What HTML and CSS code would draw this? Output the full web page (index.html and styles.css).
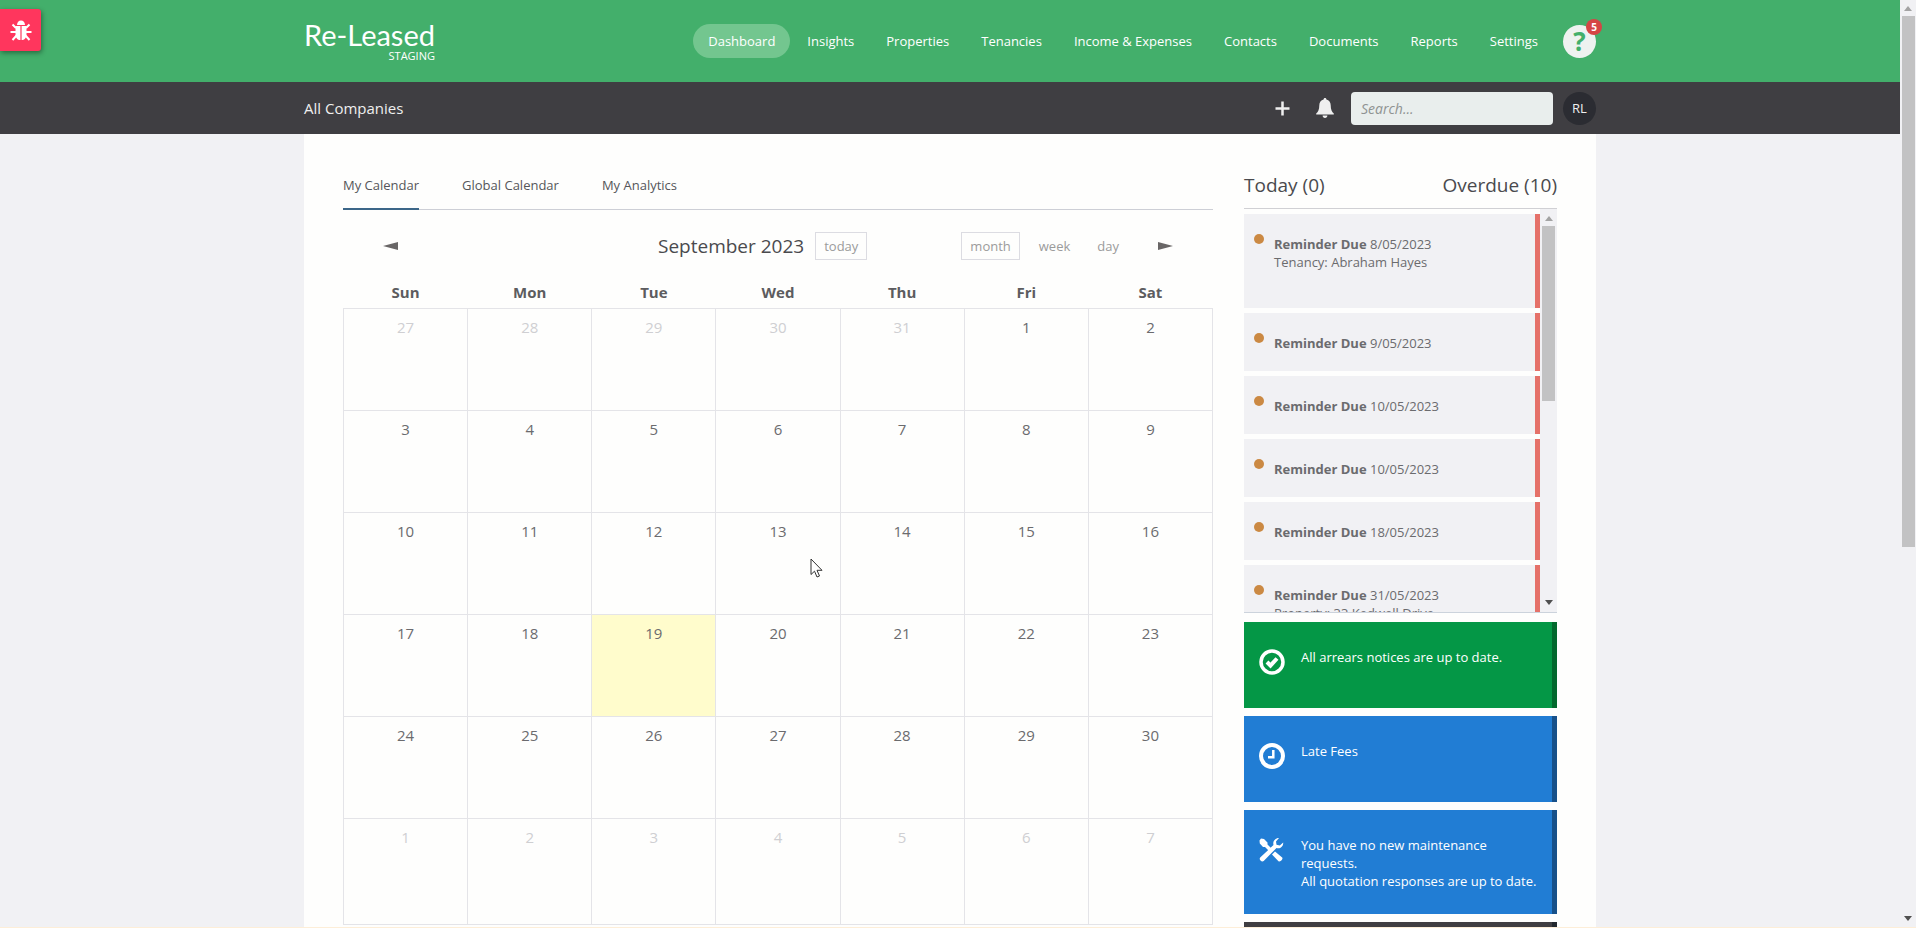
FILE: index.html
```html
<!DOCTYPE html>
<html lang="en">
<head>
    <meta charset="UTF-8">
    <meta name="viewport" content="width=device-width, initial-scale=1.0">
    <title>Dashboard - Re-Leased</title>
    <link rel="stylesheet" href="styles.css">
</head>
<body>
    <div class="page">
        <header class="header">
            <div class="container header-row">
                <a class="logo" href="#">
                    <span class="logo-name">Re-Leased</span>
                    <span class="logo-env">STAGING</span>
                </a>
                <nav class="nav">
                    <a class="active" href="#">Dashboard</a>
                    <a href="#">Insights</a>
                    <a href="#">Properties</a>
                    <a href="#">Tenancies</a>
                    <a href="#">Income &amp; Expenses</a>
                    <a href="#">Contacts</a>
                    <a href="#">Documents</a>
                    <a href="#">Reports</a>
                    <a href="#">Settings</a>
                </nav>
                <button class="help" type="button" aria-label="Help">?<span class="badge">5</span></button>
            </div>
        </header>

        <div class="subheader">
            <div class="container subheader-row">
                <a class="company" href="#">All Companies</a>
                <button class="icon-btn" type="button" aria-label="Add">
                    <svg width="15" height="15" viewBox="0 0 15 15"><path d="M7.5 0.5v14M0.5 7.5h14" stroke="#efefef" stroke-width="2.500"/></svg>
                </button>
                <button class="icon-btn" type="button" aria-label="Notifications">
                    <svg width="18" height="20" viewBox="0 0 18 20"><path fill="#efefef" d="M9 0c.9 0 1.4.6 1.4 1.5 2.7.6 4.3 2.8 4.3 5.7 0 4.500 1.300 6.800 3.100 8.300v1H.2v-1C2 14 3.300 11.700 3.300 7.200c0-2.900 1.600-5.100 4.300-5.700C7.600.6 8.100 0 9 0zM6.600 17.500h4.800c0 1.400-1 2.400-2.400 2.400s-2.400-1-2.400-2.400z"/></svg>
                </button>
                <input class="search" type="text" placeholder="Search..." aria-label="Search">
                <button class="avatar" type="button">RL</button>
            </div>
        </div>

        <main class="container content">
            <section class="main">
                <div class="tabs">
                    <a class="active" href="#">My Calendar</a>
                    <a href="#">Global Calendar</a>
                    <a href="#">My Analytics</a>
                </div>

                <div class="toolbar">
                    <button class="arrow" type="button" aria-label="Previous month">
                        <svg width="15" height="8" viewBox="0 0 15 8"><path fill="#696666" d="M0 4L15 0v8z"/></svg>
                    </button>
                    <div class="toolbar-title">
                        <h2>September 2023</h2>
                        <button class="boxed" type="button">today</button>
                    </div>
                    <div class="views">
                        <button class="boxed" type="button">month</button>
                        <button type="button">week</button>
                        <button class="day" type="button">day</button>
                    </div>
                    <button class="arrow" type="button" aria-label="Next month">
                        <svg width="15" height="8" viewBox="0 0 15 8"><path fill="#696666" d="M15 4L0 0v8z"/></svg>
                    </button>
                </div>

                <table class="calendar">
                    <thead>
                        <tr><th>Sun</th><th>Mon</th><th>Tue</th><th>Wed</th><th>Thu</th><th>Fri</th><th>Sat</th></tr>
                    </thead>
                    <tbody>
                        <tr><td class="other">27</td><td class="other">28</td><td class="other">29</td><td class="other">30</td><td class="other">31</td><td>1</td><td>2</td></tr>
                        <tr><td>3</td><td>4</td><td>5</td><td>6</td><td>7</td><td>8</td><td>9</td></tr>
                        <tr><td>10</td><td>11</td><td>12</td><td>13</td><td>14</td><td>15</td><td>16</td></tr>
                        <tr><td>17</td><td>18</td><td class="today">19</td><td>20</td><td>21</td><td>22</td><td>23</td></tr>
                        <tr><td>24</td><td>25</td><td>26</td><td>27</td><td>28</td><td>29</td><td>30</td></tr>
                        <tr><td class="other">1</td><td class="other">2</td><td class="other">3</td><td class="other">4</td><td class="other">5</td><td class="other">6</td><td class="other">7</td></tr>
                    </tbody>
                </table>
            </section>

            <aside class="sidebar">
                <div class="sidebar-head">
                    <h2>Today (0)</h2>
                    <h2>Overdue (10)</h2>
                </div>
                <div class="reminders">
                    <ul class="reminder-list">
                        <li><b>Reminder Due</b> 8/05/2023<br>Tenancy: Abraham Hayes<br>&nbsp;</li>
                        <li><b>Reminder Due</b> 9/05/2023</li>
                        <li><b>Reminder Due</b> 10/05/2023</li>
                        <li><b>Reminder Due</b> 10/05/2023</li>
                        <li><b>Reminder Due</b> 18/05/2023</li>
                        <li><b>Reminder Due</b> 31/05/2023<br>Property: 33 Kedwell Drive</li>
                    </ul>
                    <div class="scrollbar list-bar">
                        <svg width="8" height="5" viewBox="0 0 8 5"><path fill="#a3a3a3" d="M4 0l4 5H0z"/></svg>
                        <div class="thumb"></div>
                        <svg width="8" height="5" viewBox="0 0 8 5"><path fill="#505050" d="M4 5l4-5H0z"/></svg>
                    </div>
                </div>

                <div class="tiles">
                    <a class="tile green" href="#">
                        <svg width="26" height="26" viewBox="0 0 26 26" fill="none" stroke="#fff"><circle cx="13" cy="13" r="11" stroke-width="3.500"/><path d="M8 13l3.500 3.500L18 9.500" stroke-width="4"/></svg>
                        <span>All arrears notices are up to date.</span>
                    </a>
                    <a class="tile" href="#">
                        <svg width="26" height="26" viewBox="0 0 26 26" fill="none" stroke="#fff"><circle cx="13" cy="13" r="11" stroke-width="4"/><path d="M14.300 7v7.200H9" stroke-width="2.500"/></svg>
                        <span>Late Fees</span>
                    </a>
                    <a class="tile" href="#">
                        <svg width="26" height="26" viewBox="0 0 26 26" fill="#fff"><path d="M2 1.500L5 2l3.500 3.500v2l4 4-2.500 2.500-4-4H4L.8 6.500.5 3.500z"/><path d="M16 14.500l7.200 6c1.200 1.500-2 5-3.700 3.700L13 17.500z"/><path d="M20 1c-4 0-6.500 3.500-5.500 7L1.200 20.500c-1.800 2 1.500 5.200 3.500 3.500L17.500 11c3.500 1.200 7-1.500 6.700-5.500l-3.400 3-3.300-.7-.5-3.300z"/></svg>
                        <span>You have no new maintenance requests.<br>All quotation responses are up to date.</span>
                    </a>
                    <a class="tile dark" href="#"></a>
                </div>
            </aside>
        </main>
    </div>

    <div class="scrollbar page-bar">
        <svg width="8" height="5" viewBox="0 0 8 5"><path fill="#a3a3a3" d="M4 0l4 5H0z"/></svg>
        <div class="thumb"></div>
        <svg width="8" height="5" viewBox="0 0 8 5"><path fill="#505050" d="M4 5l4-5H0z"/></svg>
    </div>

    <button class="bug" type="button" aria-label="Report a bug">
        <svg width="22" height="21" viewBox="0 0 22 21"><path fill="#fff" d="M7 5a4 4.500 0 0 1 8 0z"/><path fill="#fff" d="M5.500 6h4.900v14C7.500 20 5.500 18 5.500 14zM11.600 6h4.900v8c0 4-2 6-4.900 6z"/><path d="M6 8L2.500 4.500M6 12H.5M6.500 15.500L2.500 20M16 8l3.500-3.500M16 12h5.500M15.500 15.500l4 4.500" stroke="#fff" stroke-width="2"/></svg>
    </button>

    <svg class="cursor" width="13" height="20" viewBox="0 0 13 20"><path fill="#fff" stroke="#333" d="M1 1v15.500l3.500-3.300 2.500 5.800 2.500-1-2.500-5.700h5z"/></svg>
</body>
</html>
```
FILE: styles.css
```css
*{
    margin: 0;
    padding: 0;
    box-sizing: border-box;
}
body{
    display: flex;
    height: 100vh;
    overflow: hidden;
    border-bottom: 1px solid #fdeed8;
    font-family: "Open Sans", sans-serif;
    font-size: 13px;
    line-height: 18px;
    color: #6b6b6e;
    background-color: #f1f1f4;
}
a{
    color: inherit;
    text-decoration: none;
}
button{
    border: none;
    background: none;
    font: inherit;
    color: inherit;
}
h2{
    font-size: 19px;
    font-weight: 400;
    line-height: 26px;
    color: #4a4a4d;
}
.page{
    flex: 1;
    min-width: 0;
    display: flex;
    flex-direction: column;
    overflow: hidden;
}
.container{
    width: 100%;
    max-width: 1292px;
    margin: 0 auto;
}

/* header */
.header{
    flex: none;
    background-color: #43af6b;
    color: #fff;
}
.header-row{
    display: flex;
    align-items: center;
    height: 82px;
}
.logo{
    display: flex;
    flex-direction: column;
    align-items: flex-end;
    margin-right: auto;
}
.logo-name{
    font-family: Lato, sans-serif;
    font-size: 29px;
    line-height: 30px;
}
.logo-env{
    font-size: 11px;
    line-height: 12px;
}
.nav{
    display: flex;
    gap: 2px;
}
.nav a{
    padding: 8px 15px;
    border-radius: 17px;
}
.nav a.active{
    background-color: #73c68f;
}
.help{
    position: relative;
    width: 33px;
    height: 33px;
    margin-left: 10px;
    border-radius: 50%;
    background-color: #eef2f0;
    color: #43af6b;
    font-size: 26px;
    font-weight: 700;
    line-height: 33px;
}
.badge{
    position: absolute;
    top: -6px;
    right: -6px;
    width: 16px;
    height: 16px;
    border-radius: 50%;
    background-color: #d54545;
    color: #fff;
    font-size: 10px;
    line-height: 16px;
}
.subheader{
    flex: none;
    background-color: #3f3e42;
    color: #efefef;
}
.subheader-row{
    display: flex;
    align-items: center;
    height: 52px;
}
.company{
    margin-right: auto;
    font-size: 15px;
}
.icon-btn{
    display: flex;
    margin-right: 26px;
}
.icon-btn + .icon-btn{
    margin-right: 17px;
}
.search{
    width: 202px;
    height: 33px;
    padding: 0 10px;
    border: none;
    border-radius: 4px;
    background-color: #e9eeed;
    font: inherit;
    font-size: 14px;
}
.search::placeholder{
    color: #8f9392;
    font-style: italic;
}
.avatar{
    width: 33px;
    height: 33px;
    margin-left: 10px;
    border-radius: 50%;
    background-color: #2b2c32;
}

/* content */
.content{
    flex: 1;
    display: flex;
    align-items: flex-start;
    gap: 31px;
    padding: 36px 39px 0;
    background-color: #fefefd;
}
.main{
    flex: 1;
}
.tabs{
    display: flex;
    gap: 43px;
    height: 40px;
    border-bottom: 1px solid #cdcfd6;
    color: #55565a;
}
.tabs a{
    height: 40px;
    padding-top: 6px;
}
.tabs a.active{
    border-bottom: 2px solid #3c6688;
}
.toolbar{
    display: flex;
    align-items: center;
    padding: 22px 40px 20px;
}
.toolbar-title{
    display: flex;
    align-items: center;
    gap: 11px;
    margin: 0 94px 0 auto;
}
.views{
    display: flex;
    align-items: center;
    gap: 19px;
    margin-right: 39px;
}
.views .day{
    margin-left: 8px;
}
.toolbar button{
    color: #9b9b9b;
}
.toolbar .boxed{
    height: 28px;
    padding: 0 8px;
    border: 1px solid #dcdce2;
}
.arrow{
    display: flex;
}
.calendar{
    width: 100%;
    border-collapse: collapse;
    table-layout: fixed;
    font-size: 15px;
    line-height: 20px;
    text-align: center;
}
.calendar th{
    height: 28px;
    padding-bottom: 3px;
    color: #5c5c5f;
}
.calendar td{
    height: 102px;
    padding-top: 8px;
    border: 1px solid #e4e4e8;
    vertical-align: top;
}
.calendar .other{
    color: #cfcfd2;
}
.calendar .today{
    background-color: #fffccc;
}
.calendar tr:last-child td{
    height: 106px;
}

/* sidebar */
.sidebar{
    width: 313px;
}
.sidebar-head{
    display: flex;
    justify-content: space-between;
    height: 39px;
    padding-top: 2px;
    border-bottom: 1px solid #d0d0d4;
}
.reminders{
    display: flex;
    height: 404px;
    border-bottom: 1px solid #ccd3dc;
    overflow: hidden;
}
.reminder-list{
    flex: 1;
    display: flex;
    flex-direction: column;
    gap: 5px;
    padding-top: 5px;
    list-style: none;
}
.reminder-list li{
    position: relative;
    flex: none;
    padding: 21px 0 19px 30px;
    border-right: 5px solid #e57169;
    background-color: #f1f1f4;
}
.reminder-list li::before{
    content: "";
    position: absolute;
    top: 20px;
    left: 10px;
    width: 10px;
    height: 10px;
    border-radius: 50%;
    background-color: #cb8943;
}
.tiles{
    display: flex;
    flex-direction: column;
    gap: 8px;
    margin-top: 9px;
}
.tile{
    display: flex;
    gap: 16px;
    min-height: 86px;
    padding: 26px 10px 24px 15px;
    border-right: 5px solid #17518a;
    background-color: #217dd4;
    color: #fff;
}
.tile.green{
    border-color: #02682d;
    background-color: #049746;
}
.tile.dark{
    border-color: #22272e;
    background-color: #3f3e42;
}
.tile svg{
    flex: none;
    margin-top: 1px;
}

/* scrollbars */
.scrollbar{
    display: flex;
    flex-direction: column;
    align-items: center;
    width: 16px;
    padding: 6px 0;
    background-color: #f1f1f4;
}
.scrollbar .thumb{
    width: 13px;
    margin: 5px 0 auto;
    background-color: #c2c2c3;
}
.page-bar .thumb{
    height: 58%;
}
.list-bar{
    width: 17px;
    padding: 7px 0;
}
.list-bar .thumb{
    height: 45%;
}

.bug{
    position: absolute;
    top: 9px;
    left: 0;
    display: flex;
    align-items: center;
    justify-content: center;
    width: 41px;
    height: 42px;
    border-radius: 0 3px 3px 0;
    background-color: #ff365d;
    box-shadow: 1px 2px 5px rgba(0,0,0,0.4);
}
.cursor{
    position: absolute;
    top: 558px;
    left: 810px;
}
```
